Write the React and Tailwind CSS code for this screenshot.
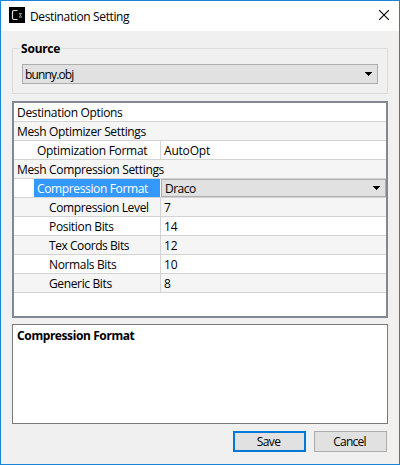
import React from 'react';

const rows = [
  { label: 'Destination Options', track: 'tracking-[-0.33px]' },
  { label: 'Mesh Optimizer Settings', shade: true, track: 'tracking-[-0.34px]' },
  { label: 'Optimization Format', value: 'AutoOpt', indent: 'pl-[23px]', track: 'tracking-[-0.29px]' },
  { label: 'Mesh Compression Settings', shade: true, track: 'tracking-[-0.33px]' },
  { label: 'Compression Format', value: 'Draco', selected: true, track: 'tracking-[-0.36px]' },
  { label: 'Compression Level', value: '7', shade: true, indent: 'pl-[35px]', track: 'tracking-[-0.36px]' },
  { label: 'Position Bits', value: '14', indent: 'pl-[35px]', track: 'tracking-[-0.33px]' },
  { label: 'Tex Coords Bits', value: '12', shade: true, indent: 'pl-[35px]', track: 'tracking-[-0.44px]' },
  { label: 'Normals Bits', value: '10', indent: 'pl-[35px]', track: 'tracking-[-0.36px]' },
  { label: 'Generic Bits', value: '8', shade: true, indent: 'pl-[35px]', track: 'tracking-[-0.36px]' },
];

function Arrow() {
  return (
    <svg width="7" height="4" viewBox="0 0 7 4" shapeRendering="crispEdges" className="shrink-0">
      <path d="M0 0h7v1H0zM1 1h5v1H1zM2 2h3v1H2zM3 3h1v1H3z" />
    </svg>
  );
}

function Row({ row }) {
  const bg = row.shade ? 'bg-[#f5f5f5]' : 'bg-white';
  if (!row.value) {
    return (
      <div className={`h-[19px] border-b border-[#d4d4d4] pl-[3px] leading-[19px] ${bg}`}>
        <span className={row.track}>{row.label}</span>
      </div>
    );
  }
  return (
    <div className={`flex h-[19px] border-b border-[#d4d4d4] leading-[19px] ${bg}`}>
      {row.selected ? (
        <div className="ml-5 h-[18px] w-[126px] bg-[#3399ff] pl-[3px] text-white">
          <span className={row.track}>{row.label}</span>
        </div>
      ) : (
        <div className={`w-[146px] ${row.indent}`}>
          <span className={row.track}>{row.label}</span>
        </div>
      )}
      {row.selected ? (
        <div className="ml-px flex h-[18px] flex-1 items-center justify-between border border-[#adadad] bg-[#e1e1e1] pl-[3px] pr-[5px]">
          <span className="tracking-[-0.5px]">{row.value}</span>
          <Arrow />
        </div>
      ) : (
        <div className="flex-1 border-l border-[#d4d4d4] pl-[3px] tracking-[-0.2px]">{row.value}</div>
      )}
    </div>
  );
}

export default function App() {
  return (
    <div className="flex h-[465px] w-[400px] flex-col border border-[#1883d7] bg-[#f0f0f0] font-['Open_Sans','Noto_Sans',sans-serif] text-[12px] whitespace-nowrap text-black">
      <header className="flex h-[30px] shrink-0 items-center bg-white pl-2 pr-[10px]">
        <svg width="16" height="16" viewBox="0 0 16 16" className="mb-[2px] shrink-0">
          <path d="M0 0h16v16H0z" />
          <path d="M8.5 3.5H5Q3.5 3.5 3.5 5v6q0 1.5 1.5 1.5h3.5" fill="none" stroke="#e0e0e0" strokeWidth="1.2" />
          <path d="M10 6.5h3M10.2 6.5l2.4 3.5M12.6 6.5L10.2 10M10 10.3h3" fill="none" stroke="#bbb" strokeWidth=".65" />
        </svg>
        <span className="ml-[5px] flex-1 pt-px tracking-[-0.37px]">Destination Setting</span>
        <svg width="10" height="10" viewBox="0 0 10 10" className="mb-[2px] shrink-0">
          <path d="M0 0l10 10M10 0L0 10" stroke="#000" strokeWidth="1.1" />
        </svg>
      </header>

      <fieldset className="mx-[11px] mt-[9px] h-[54px] shrink-0 border border-[#dcdcdc] px-[9px]">
        <legend className="-ml-[2px] h-[16px] pl-[1px] pr-[2px] pt-px font-['Noto_Sans',sans-serif] font-bold leading-[16px] tracking-[-0.2px]">Source</legend>
        <div className="mt-[8px] flex h-5 items-center justify-between border border-[#adadad] bg-[#e1e1e1] pl-[2px] pr-[5px]">
          <span className="pt-[2px] tracking-[-0.85px]">bunny.obj</span>
          <Arrow />
        </div>
      </fieldset>

      <main className="mx-[11px] mt-[7px] h-[217px] shrink-0 border-2 border-[#828790] bg-white">
        {rows.map((row) => (
          <Row key={row.label} row={row} />
        ))}
      </main>

      <section className="mx-[11px] mt-[6px] h-[100px] shrink-0 border border-[#7a7a7a] bg-white pl-1 pt-[3px] font-['Noto_Sans',sans-serif] font-bold leading-[16px] tracking-[-0.39px]">
        Compression Format
      </section>

      <footer className="mr-3 mt-[7px] flex justify-end gap-2">
        <button className="h-[21px] w-[73px] border-2 border-[#0078d7] bg-[#e1e1e1] pr-[2px] leading-[18px] tracking-[-0.6px]">Save</button>
        <button className="h-[21px] w-[73px] border border-[#adadad] bg-[#e1e1e1] pr-[2px] leading-[20px] tracking-[-0.8px]">Cancel</button>
      </footer>
    </div>
  );
}
